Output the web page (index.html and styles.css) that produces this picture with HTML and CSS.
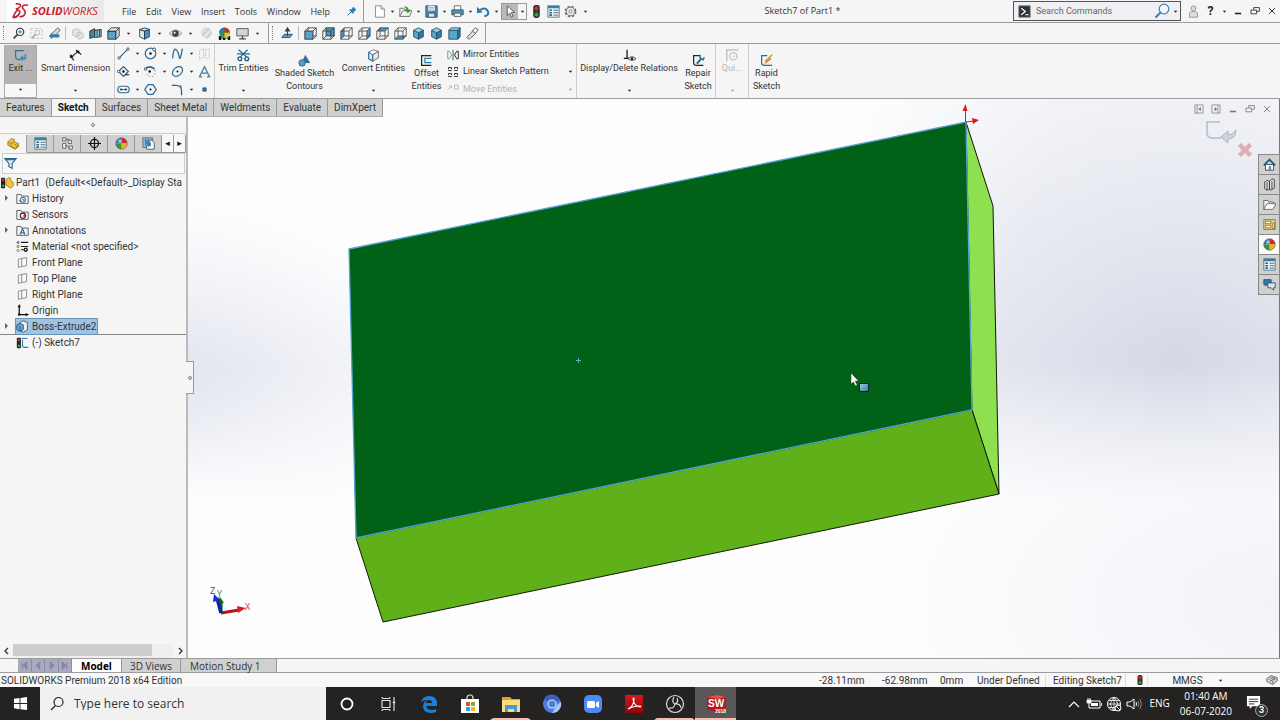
FILE: index.html
```html
<!DOCTYPE html>
<html lang="en">
<head>
<meta charset="utf-8">
<title>Sketch7 of Part1 - SOLIDWORKS</title>
<link rel="stylesheet" href="styles.css">
</head>
<body>
<svg class="sprite" aria-hidden="true">
  <defs>
    <linearGradient id="blueFill" x1="0" y1="0" x2="1" y2="1"><stop offset="0" stop-color="#9fd0e8"/><stop offset="1" stop-color="#2b77a0"/></linearGradient>
    <linearGradient id="redFill" x1="0" y1="0" x2="0" y2="1"><stop offset="0" stop-color="#d8181c"/><stop offset="1" stop-color="#8e0508"/></linearGradient>
  </defs>
  <symbol id="i-down" viewBox="0 0 8 8"><path d="M2 3h4L4 5.500z" fill="#222"/></symbol>
  <symbol id="i-pin" viewBox="0 0 16 16"><path d="M1 15l6-6" stroke="#2a6f98" stroke-width="1.500"/><path d="M3 6l7 7 1-4 4-3-5-5-3 4z" fill="#2f7fae"/></symbol>
  <symbol id="i-new" viewBox="0 0 16 16"><path d="M3 1h7l4 4v10H3z" fill="#fff" stroke="#777"/><path d="M10 1v4h4" fill="#ddd" stroke="#777"/></symbol>
  <symbol id="i-open" viewBox="0 0 16 16"><path d="M1 4h5l1 2h6v8H1z" fill="#eee" stroke="#666"/><path d="M1 14l4-7h11l-3 7z" fill="#f6f6f6" stroke="#666"/><path d="M6 2q5-1 6 4h3l-4 4-4-4h2Q9 3 6 2z" fill="#3c9b35"/></symbol>
  <symbol id="i-save" viewBox="0 0 16 16"><path d="M1 1h14v14H1z" fill="#4d8aab" stroke="#26506a"/><path d="M4 1h8v6H4z" fill="#eef5f8"/><path d="M4 10h8v5H4z" fill="#dfe7ec" stroke="#26506a"/><path d="M5 3h6M5 5h6" stroke="#8aa"/></symbol>
  <symbol id="i-print" viewBox="0 0 16 16"><path d="M4 1h8v6H4z" fill="#fff" stroke="#555"/><path d="M1 6h14v6H1z" fill="#4f94ba" stroke="#2b4c5e"/><path d="M4 10h8v4H4z" fill="#fff" stroke="#444"/></symbol>
  <symbol id="i-undo" viewBox="0 0 16 16"><path d="M4 6q6-4 9 1t-4 7" fill="none" stroke="#2b78a8" stroke-width="2.500"/><path d="M0 2v8l7-1z" fill="#2b78a8"/></symbol>
  <symbol id="i-cursor" viewBox="0 0 16 16"><path d="M4 1v12l3-3 2 5 2-1-2-5h4z" fill="#fff" stroke="#444"/></symbol>
  <symbol id="i-traffic" viewBox="0 0 16 16"><rect x="4" y="0" width="8" height="16" rx="3" fill="#2b2b2b"/><circle cx="8" cy="4" r="2.500" fill="#e02b20"/><circle cx="8" cy="8" r="1.500" fill="#5a4a20"/><circle cx="8" cy="12" r="2.500" fill="#2aa84a"/></symbol>
  <symbol id="i-props" viewBox="0 0 16 16"><path d="M1 1h14v14H1z" fill="#e9f2f7" stroke="#4a6b7c"/><path d="M1 1h14v3H1z" fill="#3a7ea6"/><path d="M3 6.500h3M3 9.500h3M3 12.500h3" stroke="#1f5f88" stroke-width="2"/><path d="M8 6.500h6M8 9.500h6M8 12.500h6" stroke="#456"/></symbol>
  <symbol id="i-gear" viewBox="0 0 16 16"><circle cx="8" cy="8" r="6.300" fill="none" stroke="#666" stroke-width="2" stroke-dasharray="3 2"/><circle cx="8" cy="8" r="5" fill="#f4f4f4" stroke="#666"/><circle cx="8" cy="8" r="2" fill="none" stroke="#666"/></symbol>
  <symbol id="i-prompt" viewBox="0 0 16 16"><path d="M1 1h14v14H1z" fill="#2c3338" stroke="#777"/><path d="M4 4l5 4-5 4M9 12h4" fill="none" stroke="#fff" stroke-width="1.500"/></symbol>
  <symbol id="i-search" viewBox="0 0 16 16"><circle cx="10" cy="6" r="4.800" fill="#f2f8fc" stroke="currentColor" stroke-width="1.200"/><path d="M6.500 9.500L1.500 14.500" stroke="currentColor" stroke-width="2"/></symbol>
  <symbol id="i-user" viewBox="0 0 16 16"><circle cx="8" cy="4" r="3" fill="#ddd" stroke="#888"/><path d="M3 15v-4q0-3 5-3t5 3v4z" fill="#ddd" stroke="#888"/></symbol>
  <symbol id="i-min" viewBox="0 0 16 16"><path d="M3 12h10" stroke="currentColor" stroke-width="2.500"/></symbol>
  <symbol id="i-restore" viewBox="0 0 16 16"><path d="M6 6V2.500h9v6h-4M1.500 6.500h9v6h-9z" fill="none" stroke="currentColor" stroke-width="1.300"/></symbol>
  <symbol id="i-close" viewBox="0 0 16 16"><path d="M3 3l10 10M13 3L3 13" stroke="currentColor" stroke-width="1.400"/></symbol>
  <symbol id="i-zoomfit" viewBox="0 0 16 16"><circle cx="10" cy="6" r="4.500" fill="#e6f0f6" stroke="#333" stroke-width="1.400"/><path d="M7 9l-5 5" stroke="#444" stroke-width="2.200"/><path d="M10 3.500v5M7.500 6h5" stroke="#2f7fae"/></symbol>
  <symbol id="i-zoomarea" viewBox="0 0 16 16"><path d="M1 2h14v12H1z" fill="none" stroke="#bbb" stroke-dasharray="3 2"/><circle cx="9" cy="7" r="3" fill="none" stroke="#aaa"/><path d="M7 9l-5 5" stroke="#aaa" stroke-width="2"/></symbol>
  <symbol id="i-prev" viewBox="0 0 16 16"><path d="M4 9l8-8 3 3-8 8z" fill="#ddd" stroke="#444"/><path d="M1 11l4-4v2h9v4H5v2z" fill="#2f7fae"/></symbol>
  <symbol id="i-sectiong" viewBox="0 0 16 16"><path d="M2 4l5-2 4 2v6l-5 2-4-2zM7 8l4-2 4 2v5l-4 2-4-2z" fill="#e4e4e4" stroke="#bbb"/></symbol>
  <symbol id="i-section" viewBox="0 0 16 16"><path d="M1 5l6-3v10l-6 2z" fill="#3f87ae" stroke="#222"/><path d="M7 4l8-1v9l-8 1z" fill="#88bedb" stroke="#222"/><path d="M10 4v8M13 3v9" stroke="#333"/></symbol>
  <symbol id="i-cube" viewBox="0 0 16 16"><path d="M1 5h10v10H1z" fill="#5aa3c8" stroke="#222"/><path d="M1 5l4-4h10l-4 4z" fill="#e3eef4" stroke="#222"/><path d="M15 1v10l-4 4V5z" fill="#c6dce8" stroke="#222"/></symbol>
  <symbol id="i-cubeshade" viewBox="0 0 16 16"><path d="M2 3l6 2v10l-6-3z" fill="#d5e8f2" stroke="#234"/><path d="M8 5l6-2v9l-6 3z" fill="#4a93ba" stroke="#234"/><path d="M2 3l6-2 6 2-6 2z" fill="#bcdcec" stroke="#234"/></symbol>
  <symbol id="i-eye" viewBox="0 0 16 16"><path d="M0 8q8-9 16 0-8 8-16 0z" fill="#e4e4e4" stroke="#888"/><circle cx="8" cy="8" r="4" fill="#444"/><circle cx="7" cy="7" r="1.200" fill="#fff"/></symbol>
  <symbol id="i-ballgrey" viewBox="0 0 16 16"><circle cx="8" cy="7" r="6" fill="#e2e2e2" stroke="#ccc"/><path d="M3 10l8-8M8 14l6-7" stroke="#ccc" stroke-width="2"/></symbol>
  <symbol id="i-ball" viewBox="0 0 16 16"><circle cx="8" cy="8" r="7" fill="#fff"/><path d="M8 8V1a7 7 0 0 1 7 7z" fill="#d8281e"/><path d="M8 8V1a7 7 0 0 0-7 7z" fill="#2e77bd"/><path d="M8 8h7a7 7 0 0 1-7 7z" fill="#e8b61c"/><path d="M8 8v7a7 7 0 0 1-7-7z" fill="#2c9a3c"/><circle cx="8" cy="8" r="7" fill="none" stroke="#555" stroke-width=".8"/><circle cx="6" cy="5" r="2" fill="#fff" opacity=".6"/></symbol>
  <symbol id="i-scene" viewBox="0 0 16 16"><path d="M1 8h14v8H1z" fill="#fff"/><path d="M1 11h3v2h3v-2h3v2h3v-2h2v5h-3v-2H9v2H6v-2H4v2H1z" fill="#111"/><circle cx="8" cy="7" r="6.500" fill="#2c9a3c"/><path d="M8 7V.5A6.500 6.500 0 0 1 14.500 7z" fill="#d8281e"/><path d="M8 7V.5A6.500 6.500 0 0 0 1.500 7z" fill="#2e77bd"/><path d="M8 7h6.500A6.500 6.500 0 0 1 8 13.500z" fill="#e8c61c"/></symbol>
  <symbol id="i-monitor" viewBox="0 0 16 16"><path d="M1 2h14v9H1z" fill="#d0d5d8" stroke="#444"/><path d="M8 11v3M4 14.500h8" stroke="#444" stroke-width="1.500"/></symbol>
  <symbol id="i-normal" viewBox="0 0 16 16"><path d="M1 13l3-4h10l-3 4z" fill="#5c9dc0" stroke="#246"/><path d="M8 11V3M5.500 5L8 1l2.500 4z" stroke="#246" fill="#246" stroke-width="1.300"/></symbol>
  <symbol id="i-wfront" viewBox="0 0 16 16"><path d="M5 1h10v10H5zM1 5l4-4M11 15l4-4M11 5l4-4M1 15l4-4" fill="none" stroke="#333"/><path d="M1 5h10v10H1z" fill="#5aa3c8" stroke="#222"/></symbol>
  <symbol id="i-wback" viewBox="0 0 16 16"><path d="M5 1h10v10H5z" fill="#4c97bf" stroke="#222"/><path d="M1 5h10v10H1zM1 5l4-4M11 15l4-4M11 5l4-4M1 15l4-4" fill="none" stroke="#333"/></symbol>
  <symbol id="i-wleft" viewBox="0 0 16 16"><path d="M1 5l4-4v10l-4 4z" fill="#4c97bf"/><path d="M5 1h10v10H5zM1 5h10v10H1zM1 5l4-4M11 15l4-4M11 5l4-4M1 15l4-4" fill="none" stroke="#444"/></symbol>
  <symbol id="i-wright" viewBox="0 0 16 16"><path d="M11 5l4-4v10l-4 4z" fill="#4c97bf"/><path d="M5 1h10v10H5zM1 5h10v10H1zM1 5l4-4M11 15l4-4M11 5l4-4M1 15l4-4" fill="none" stroke="#444"/></symbol>
  <symbol id="i-wtop" viewBox="0 0 16 16"><path d="M1 5l4-4h10l-4 4z" fill="#4c97bf"/><path d="M5 1h10v10H5zM1 5h10v10H1zM1 5l4-4M11 15l4-4M11 5l4-4M1 15l4-4" fill="none" stroke="#444"/></symbol>
  <symbol id="i-wbottom" viewBox="0 0 16 16"><path d="M1 15l4-4h10l-4 4z" fill="#4c97bf"/><path d="M5 1h10v10H5zM1 5h10v10H1zM1 5l4-4M11 15l4-4M11 5l4-4M1 15l4-4" fill="none" stroke="#444"/></symbol>
  <symbol id="i-iso" viewBox="0 0 16 16"><path d="M2 4l6 3v8l-6-3z" fill="#5aa6cc" stroke="#1d4a63"/><path d="M14 4L8 7v8l6-3z" fill="#2d7ba5" stroke="#1d4a63"/><path d="M2 4l6-3 6 3-6 3z" fill="#9ed0e8" stroke="#1d4a63"/></symbol>
  <symbol id="i-solid" viewBox="0 0 16 16"><path d="M1 4h11v11H1z" fill="#5aa6cc" stroke="#1d4a63"/><path d="M1 4l3-3h11l-3 3z" fill="#9ed0e8" stroke="#1d4a63"/><path d="M15 1v11l-3 3V4z" fill="#2d7ba5" stroke="#1d4a63"/></symbol>
  <symbol id="i-camera" viewBox="0 0 16 16"><path d="M1 13l7-8 4 3-8 7z" fill="#ddd" stroke="#555"/><path d="M8 5l3-4 4 2-3 5z" fill="#f5f5f5" stroke="#555"/></symbol>
  <symbol id="i-exit" viewBox="0 0 16 16"><path d="M12 2H2v7q0 4 4 4h2" fill="none" stroke="#2a6f98" stroke-width="1.400"/><path d="M7 11.500l4-4V10h2V6h2v7h-4v2.500z" fill="#3f8db8"/></symbol>
  <symbol id="i-dim" viewBox="0 0 16 16"><path d="M3 10L11 3M1 8l5 6M9 1l6 6" stroke="#1b1b1b" stroke-width="1.400"/><path d="M1 11l1-5 4 4zM13 2L8 2l4 4z" fill="#1b1b1b"/></symbol>
  <symbol id="i-line" viewBox="0 0 16 16"><path d="M3 13L13 3" stroke="#2a5f84" stroke-width="1.400"/><circle cx="2.500" cy="13.500" r="1.500" fill="#fff" stroke="#345"/><circle cx="13.500" cy="2.500" r="1.500" fill="#fff" stroke="#345"/></symbol>
  <symbol id="i-circle" viewBox="0 0 16 16"><circle cx="8" cy="8" r="6.500" fill="none" stroke="#2a6f98" stroke-width="1.500"/><circle cx="8" cy="8" r="1.500" fill="#111"/><circle cx="12.500" cy="3" r="1.800" fill="#fff" stroke="#333"/></symbol>
  <symbol id="i-spline" viewBox="0 0 16 16"><path d="M2 14Q3 1 6 3t4 9 4-10" fill="none" stroke="#2a6f98" stroke-width="1.600"/></symbol>
  <symbol id="i-planeg" viewBox="0 0 16 16"><path d="M2 4l5-2v11l-5 2zM9 3l5-1v11l-5 1z" fill="none" stroke="#bbb" stroke-dasharray="2 1"/></symbol>
  <symbol id="i-rect" viewBox="0 0 16 16"><path d="M8 2l6 6-6 6-6-6z" fill="none" stroke="#2a5f84" stroke-width="1.500"/><circle cx="8" cy="8" r="1.500" fill="#111"/><circle cx="2" cy="8" r="1.500" fill="#fff" stroke="#333"/><path d="M10 12h5" stroke="#333" stroke-width="1.500"/></symbol>
  <symbol id="i-arc" viewBox="0 0 16 16"><path d="M2 4q6-4 11 1" fill="none" stroke="#2a5f84" stroke-width="2"/><path d="M13 6q2 4-2 8-4 2-8-3" fill="none" stroke="#777" stroke-dasharray="2 2"/><circle cx="7" cy="8" r="1.500" fill="#111"/><circle cx="2" cy="5" r="1.500" fill="#fff" stroke="#333"/></symbol>
  <symbol id="i-ellipse" viewBox="0 0 16 16"><ellipse cx="8" cy="8" rx="7" ry="5" transform="rotate(-40 8 8)" fill="none" stroke="#2a6f98" stroke-width="1.500"/><circle cx="8" cy="8" r="1.200" fill="#111"/></symbol>
  <symbol id="i-textA" viewBox="0 0 16 16"><path d="M2 14L8 2l6 12M5 10h6M1 14.500h4M11 14.500h4" fill="none" stroke="#4a7d9c" stroke-width="1.500"/></symbol>
  <symbol id="i-slot" viewBox="0 0 16 16"><rect x="1" y="4" width="14" height="8" rx="4" fill="none" stroke="#2a6f98" stroke-width="1.500"/><path d="M4 8h8" stroke="#333"/><circle cx="5" cy="8" r="1.300" fill="#333"/><circle cx="11" cy="8" r="1.300" fill="#333"/></symbol>
  <symbol id="i-hex" viewBox="0 0 16 16"><path d="M5 2h6l4 6-4 6H5L1 8z" fill="none" stroke="#2a6f98" stroke-width="1.600"/><circle cx="8" cy="8" r="1.300" fill="#111"/></symbol>
  <symbol id="i-fillet" viewBox="0 0 16 16"><path d="M1 3h5q7 0 7 7v5" fill="none" stroke="#2a5f84" stroke-width="1.500"/><path d="M8 3h5v5" fill="none" stroke="#888" stroke-dasharray="2 1"/></symbol>
  <symbol id="i-point" viewBox="0 0 16 16"><path d="M6 6h4v4H6z" fill="#2a7db0" stroke="#1d4a63"/></symbol>
  <symbol id="i-trim" viewBox="0 0 16 16"><path d="M2 1l10 9M13 1L4 10M0 6h16" stroke="#2a6f98" stroke-width="1.600"/><circle cx="3.500" cy="12" r="2.300" fill="none" stroke="#1f5f88" stroke-width="1.700"/><circle cx="12" cy="12" r="2.300" fill="none" stroke="#1f5f88" stroke-width="1.700"/></symbol>
  <symbol id="i-shaded" viewBox="0 0 16 16"><path d="M9 1l6 10H4z" fill="#2d7397"/><circle cx="5" cy="11" r="4" fill="#5c9cbf" stroke="#25617f"/></symbol>
  <symbol id="i-convert" viewBox="0 0 16 16"><path d="M2 4l5 3v8l-5-3zM14 3L7 7v8l7-4z" fill="#e2eef4" stroke="#556"/><path d="M2 4l6-3 6 2-7 4z" fill="#fff" stroke="#556"/><path d="M2 4v8l5 3" fill="none" stroke="#2a7db0" stroke-width="1.500"/></symbol>
  <symbol id="i-offset" viewBox="0 0 16 16"><path d="M14 2H2v12h12" fill="none" stroke="#222" stroke-width="1.500"/><path d="M14 5.500H6v5h8" fill="none" stroke="#2a7db0" stroke-width="1.500"/></symbol>
  <symbol id="i-mirror" viewBox="0 0 16 16"><path d="M8 1v14" stroke="#222"/><path d="M1 3h2l3 5-3 5H1z" fill="none" stroke="#4a8a8a"/><path d="M15 3h-2l-3 5 3 5h2z" fill="none" stroke="#222" stroke-width="1.300"/></symbol>
  <symbol id="i-linear" viewBox="0 0 16 16"><path d="M2 2h4v4H2zM10 2h4v4h-4zM2 10h4v4H2zM10 10h4v4h-4z" fill="none" stroke="#333" stroke-width="1.300" stroke-dasharray="6 1"/></symbol>
  <symbol id="i-move" viewBox="0 0 16 16"><path d="M1 9l5-5M3 4h3v3M10 3h5v5h-5z" fill="none" stroke="#bbb" stroke-width="1.300"/></symbol>
  <symbol id="i-relations" viewBox="0 0 16 16"><path d="M5 1v10M1 11.500h8" stroke="#111" stroke-width="1.500"/><path d="M6 12q5-5 10 0-5 4-10 0z" fill="#fff" stroke="#333"/><circle cx="11" cy="12" r="1.700" fill="#222"/></symbol>
  <symbol id="i-repair" viewBox="0 0 16 16"><path d="M10 2H2v8q0 4 4 4h8" fill="none" stroke="#222" stroke-width="1.500"/><path d="M6 12l6-7" stroke="#25709b" stroke-width="2.500"/><path d="M10 1v4l4 2 1-3" fill="none" stroke="#25709b" stroke-width="1.700"/></symbol>
  <symbol id="i-quick" viewBox="0 0 16 16"><path d="M1 15V1h14" fill="none" stroke="#bbb" stroke-width="1.500"/><circle cx="9" cy="9" r="4.500" fill="none" stroke="#bbb" stroke-width="1.300"/><circle cx="9" cy="9" r="1" fill="#bbb"/></symbol>
  <symbol id="i-rapid" viewBox="0 0 16 16"><path d="M9 2H2v9q0 3 4 3h9" fill="none" stroke="#2a6f98" stroke-width="1.500"/><path d="M14 1L6 9l3-1-3 4 8-6-3 .5 4-5.500z" fill="#f0a020" stroke="#c65a10" stroke-width=".6"/></symbol>
  <symbol id="i-part" viewBox="0 0 16 16"><path d="M1 6l4-4 4 1v3l5 2v4l-4 3-9-5z" fill="#f0c53c" stroke="#9a7412"/><path d="M1 6l4 2 4-2M5 8v4l5 2 4-3-5-2" fill="none" stroke="#9a7412"/></symbol>
  <symbol id="i-config" viewBox="0 0 16 16"><path d="M2 1h4v4H2zM2 8h4v6H2zM9 4h4v4H9zM10 11h4v4h-4zM6 3h4v1M6 10l4 3" fill="#eee" stroke="#555"/></symbol>
  <symbol id="i-target" viewBox="0 0 16 16"><circle cx="8" cy="8" r="5" fill="none" stroke="#111" stroke-width="1.600"/><path d="M8 0v16M0 8h16" stroke="#111" stroke-width="1.400"/></symbol>
  <symbol id="i-cam" viewBox="0 0 16 16"><path d="M1 1h12v12H1z" fill="#8abada" stroke="#567"/><path d="M4 4h8l3 3v8H6z" fill="#fff" stroke="#345"/><path d="M4 6l4-2 3 3v4l-4 1z" fill="#3a83ad"/></symbol>
  <symbol id="i-filter" viewBox="0 0 16 16"><path d="M1 2h14l-5 6v6l-4-2V8z" fill="#dcebf3" stroke="#2a5f84" stroke-width="1.300"/><path d="M2 3h12" stroke="#2a6f98" stroke-width="2"/></symbol>
  <symbol id="i-partroot" viewBox="0 0 16 16"><rect x="0" y="2" width="5" height="13" rx="1" fill="#222"/><circle cx="2.500" cy="5" r="1.700" fill="#e02b20"/><circle cx="2.500" cy="12" r="1.500" fill="#2aa84a"/><path d="M6 5l3-3 3 1v3l3 2v4l-3 3-6-4z" fill="#f0c53c" stroke="#9a7412"/></symbol>
  <symbol id="i-folderhist" viewBox="0 0 16 16"><path d="M1 14V3h5l1 2h8v9z" fill="#f4f4f4" stroke="#444"/><circle cx="8.500" cy="9.500" r="3" fill="#fff" stroke="#2a7db0" stroke-width="1.300"/><path d="M8.500 8v2h2M4 10l2 2" fill="none" stroke="#333"/></symbol>
  <symbol id="i-foldersens" viewBox="0 0 16 16"><path d="M1 14V3h5l1 2h8v9z" fill="#f4f4f4" stroke="#444"/><circle cx="8.500" cy="9.500" r="3.200" fill="#fff" stroke="#222" stroke-width="1.300"/><path d="M8 10l3-3v4z" fill="#d8281e"/></symbol>
  <symbol id="i-folderann" viewBox="0 0 16 16"><path d="M1 14V3h5l1 2h8v9z" fill="#f4f4f4" stroke="#444"/><path d="M5 13l3-7 3 7M6 11h4" fill="none" stroke="#2a6fa8" stroke-width="1.500"/></symbol>
  <symbol id="i-material" viewBox="0 0 16 16"><path d="M6 3h9M6 8h9M6 12h5" stroke="#222" stroke-width="1.500"/><circle cx="2.500" cy="3" r="1.500" fill="#6ab0c0" stroke="#555" stroke-width=".6"/><circle cx="2.500" cy="8" r="1.500" fill="#e5c33a" stroke="#555" stroke-width=".6"/><circle cx="2.500" cy="13" r="1.500" fill="#ddd" stroke="#555" stroke-width=".6"/><circle cx="12" cy="12" r="2.700" fill="#222"/><circle cx="12" cy="12" r="1" fill="#fff"/></symbol>
  <symbol id="i-plane" viewBox="0 0 16 16"><path d="M3 4l4-1v10l-4 1zM7 3l6-1v10l-6 1" fill="#fafafa" stroke="#777"/></symbol>
  <symbol id="i-origin" viewBox="0 0 16 16"><path d="M4 3v10h10" fill="none" stroke="#111" stroke-width="1.500"/><path d="M4 0L2 4h4zM16 13l-4-2v4z" fill="#111"/><circle cx="4" cy="13" r="1.600" fill="#111"/></symbol>
  <symbol id="i-boss" viewBox="0 0 16 16"><path d="M5 3l4-2 5 2v9l-5 3-4-2z" fill="#eef4f8" stroke="#444"/><path d="M1 6l4-2 4 2v6l-4 2-4-2z" fill="#5fa6cb" stroke="#1d5577"/><path d="M5 8v6" stroke="#1d5577"/></symbol>
  <symbol id="i-sketch" viewBox="0 0 16 16"><rect x="1" y="2" width="5" height="13" rx="1" fill="#222"/><circle cx="3.500" cy="5" r="1.600" fill="#e02b20"/><circle cx="3.500" cy="12" r="1.600" fill="#2aa84a"/><path d="M7 3h7M8 5v7q0 2 3 2h4" fill="none" stroke="#2a7db0" stroke-width="1.300"/></symbol>
  <symbol id="i-panel-l" viewBox="0 0 16 16"><path d="M1.500 1.500h13v13h-13zM5 2v13" fill="none" stroke="#888" stroke-width="1.300"/><path d="M11 5v6L7 8z" fill="#666"/></symbol>
  <symbol id="i-panel-r" viewBox="0 0 16 16"><path d="M1.500 1.500h13v13h-13zM11 2v13" fill="none" stroke="#888" stroke-width="1.300"/><path d="M6 5v6l4-3z" fill="#666"/></symbol>
  <symbol id="i-home" viewBox="0 0 16 16"><path d="M3 8h10v7H3z" fill="#fff" stroke="#333"/><path d="M1 9l7-7 7 7" fill="none" stroke="#1f5d82" stroke-width="2.200"/><path d="M7 10h3v5H7z" fill="#6a8fa5"/></symbol>
  <symbol id="i-library" viewBox="0 0 16 16"><path d="M2 5l3-2 3 1v10l-3 1-3-2zM8 4l3-3 3 1v10l-4 3-2-1z" fill="#ddd" stroke="#333"/><path d="M5 5v10M11 4v10" stroke="#333"/></symbol>
  <symbol id="i-folder" viewBox="0 0 16 16"><path d="M1 14V3h5l1 2h6v2" fill="#f4f4f4" stroke="#555"/><path d="M1 14l4-7h11l-4 7z" fill="#fff" stroke="#555"/></symbol>
  <symbol id="i-palette" viewBox="0 0 16 16"><path d="M1 2h14v12H1z" fill="#f4dc84" stroke="#666"/><path d="M3 4h7v3H3zM3 9h7v3H3zM12 6h2v7h-2z" fill="#fff" stroke="#8a6510"/></symbol>
  <symbol id="i-chat" viewBox="0 0 16 16"><path d="M1 2h9v6H5l-2 2V8H1z" fill="#2f7ca8" stroke="#1d4a63"/><path d="M6 6h9v6h-2v3l-3-3H6z" fill="#d4e8f2" stroke="#345"/></symbol>
</svg>

<header class="titlebar">
  <div class="brand">
    <svg class="ds" viewBox="0 0 20 18" aria-hidden="true"><path d="M5 1.500Q11 1 10 4 9 6 5 7M2 16Q5 9 7 8q4 1 1 5-2 3-6 3M18 3q-6-1-6 2 0 1 2 3 2 3 0 5-1 2-5 2" fill="none" stroke="#c6202a" stroke-width="1.700"/></svg>
    <span class="wordmark"><b>SOLID</b>WORKS</span>
  </div>
  <nav class="menu">
    <button>File</button><button>Edit</button><button>View</button><button>Insert</button><button>Tools</button><button>Window</button><button>Help</button>
  </nav>
  <button class="pin" aria-label="Pin menu"><svg class="ic s10"><use href="#i-pin"/></svg></button>
  <div class="quick">
    <button aria-label="New"><svg class="ic"><use href="#i-new"/></svg></button><button class="dd" aria-label="New options"><svg><use href="#i-down"/></svg></button>
    <button aria-label="Open"><svg class="ic"><use href="#i-open"/></svg></button><button class="dd" aria-label="Open options"><svg><use href="#i-down"/></svg></button>
    <button aria-label="Save"><svg class="ic"><use href="#i-save"/></svg></button><button class="dd" aria-label="Save options"><svg><use href="#i-down"/></svg></button>
    <button aria-label="Print"><svg class="ic"><use href="#i-print"/></svg></button><button class="dd" aria-label="Print options"><svg><use href="#i-down"/></svg></button>
    <button aria-label="Undo"><svg class="ic"><use href="#i-undo"/></svg></button><button class="dd" aria-label="Undo options"><svg><use href="#i-down"/></svg></button>
    <span class="select-tool"><button class="on" aria-label="Select"><svg class="ic"><use href="#i-cursor"/></svg></button><button class="dd" aria-label="Select options"><svg><use href="#i-down"/></svg></button></span>
    <button class="wide" aria-label="Rebuild"><svg class="ic"><use href="#i-traffic"/></svg></button>
    <button class="wide" aria-label="File properties"><svg class="ic"><use href="#i-props"/></svg></button>
    <button class="wide" aria-label="Options"><svg class="ic"><use href="#i-gear"/></svg></button><button class="dd" aria-label="More options"><svg><use href="#i-down"/></svg></button>
  </div>
  <h1 class="doc-title">Sketch7 of Part1 *</h1>
  <form class="search">
    <svg class="ic"><use href="#i-prompt"/></svg>
    <input type="text" placeholder="Search Commands" aria-label="Search Commands">
    <svg class="ic s16 glass"><use href="#i-search"/></svg>
    <button type="button" class="dd" aria-label="Search options"><svg><use href="#i-down"/></svg></button>
  </form>
  <div class="win">
    <button aria-label="Sign in"><svg class="ic"><use href="#i-user"/></svg></button>
    <button class="help" aria-label="Help">?</button><button class="dd" aria-label="Help options"><svg><use href="#i-down"/></svg></button>
    <button aria-label="Minimize"><svg class="ic s10"><use href="#i-min"/></svg></button>
    <button aria-label="Restore"><svg class="ic s10"><use href="#i-restore"/></svg></button>
    <button aria-label="Close"><svg class="ic s10"><use href="#i-close"/></svg></button>
  </div>
</header>

<div class="viewbar">
  <div class="strip">
    <button aria-label="Zoom to fit"><svg class="ic"><use href="#i-zoomfit"/></svg></button>
    <button aria-label="Zoom to area"><svg class="ic"><use href="#i-zoomarea"/></svg></button>
    <button aria-label="Previous view"><svg class="ic"><use href="#i-prev"/></svg></button>
    <i class="sep"></i>
    <button aria-label="Dynamic annotation"><svg class="ic"><use href="#i-sectiong"/></svg></button>
    <button aria-label="Section view"><svg class="ic"><use href="#i-section"/></svg></button>
    <button aria-label="View orientation"><svg class="ic"><use href="#i-cube"/></svg></button><button class="dd" aria-label="Orientation options"><svg><use href="#i-down"/></svg></button>
    <button aria-label="Display style"><svg class="ic"><use href="#i-cubeshade"/></svg></button><button class="dd" aria-label="Display options"><svg><use href="#i-down"/></svg></button>
    <button aria-label="Hide or show"><svg class="ic"><use href="#i-eye"/></svg></button><button class="dd" aria-label="Visibility options"><svg><use href="#i-down"/></svg></button>
    <button aria-label="Edit appearance"><svg class="ic"><use href="#i-ballgrey"/></svg></button>
    <button aria-label="Apply scene"><svg class="ic"><use href="#i-scene"/></svg></button>
    <button aria-label="View settings"><svg class="ic"><use href="#i-monitor"/></svg></button><button class="dd" aria-label="Settings options"><svg><use href="#i-down"/></svg></button>
  </div>
  <div class="strip">
    <button aria-label="Normal to"><svg class="ic"><use href="#i-normal"/></svg></button>
    <i class="sep"></i>
    <button aria-label="Front"><svg class="ic"><use href="#i-wfront"/></svg></button>
    <button aria-label="Back"><svg class="ic"><use href="#i-wback"/></svg></button>
    <button aria-label="Left"><svg class="ic"><use href="#i-wleft"/></svg></button>
    <button aria-label="Right"><svg class="ic"><use href="#i-wright"/></svg></button>
    <button aria-label="Top"><svg class="ic"><use href="#i-wtop"/></svg></button>
    <button aria-label="Bottom"><svg class="ic"><use href="#i-wbottom"/></svg></button>
    <button aria-label="Isometric"><svg class="ic"><use href="#i-iso"/></svg></button>
    <button aria-label="Trimetric"><svg class="ic"><use href="#i-iso"/></svg></button>
    <button aria-label="Dimetric"><svg class="ic"><use href="#i-solid"/></svg></button>
    <button aria-label="Camera view"><svg class="ic"><use href="#i-camera"/></svg></button>
  </div>
</div>

<div class="ribbon">
  <button class="tool exit"><svg class="ic"><use href="#i-exit"/></svg><span>Exit ...</span><svg class="arrow"><use href="#i-down"/></svg></button>
  <button class="tool smart"><svg class="ic"><use href="#i-dim"/></svg><span>Smart Dimension</span><svg class="arrow"><use href="#i-down"/></svg></button>
  <div class="shapes">
    <button aria-label="Line"><svg class="ic"><use href="#i-line"/></svg></button><button class="dd" aria-label="Line options"><svg><use href="#i-down"/></svg></button>
    <button aria-label="Circle"><svg class="ic"><use href="#i-circle"/></svg></button><button class="dd" aria-label="Circle options"><svg><use href="#i-down"/></svg></button>
    <button aria-label="Spline"><svg class="ic"><use href="#i-spline"/></svg></button><button class="dd" aria-label="Spline options"><svg><use href="#i-down"/></svg></button>
    <button aria-label="Plane" disabled><svg class="ic"><use href="#i-planeg"/></svg></button>
    <button aria-label="Rectangle"><svg class="ic"><use href="#i-rect"/></svg></button><button class="dd" aria-label="Rectangle options"><svg><use href="#i-down"/></svg></button>
    <button aria-label="Arc"><svg class="ic"><use href="#i-arc"/></svg></button><button class="dd" aria-label="Arc options"><svg><use href="#i-down"/></svg></button>
    <button aria-label="Ellipse"><svg class="ic"><use href="#i-ellipse"/></svg></button><button class="dd" aria-label="Ellipse options"><svg><use href="#i-down"/></svg></button>
    <button aria-label="Text"><svg class="ic"><use href="#i-textA"/></svg></button>
    <button aria-label="Slot"><svg class="ic"><use href="#i-slot"/></svg></button><button class="dd" aria-label="Slot options"><svg><use href="#i-down"/></svg></button>
    <button aria-label="Polygon"><svg class="ic"><use href="#i-hex"/></svg></button><i></i>
    <button aria-label="Fillet"><svg class="ic"><use href="#i-fillet"/></svg></button><button class="dd" aria-label="Fillet options"><svg><use href="#i-down"/></svg></button>
    <button aria-label="Point"><svg class="ic"><use href="#i-point"/></svg></button>
  </div>
  <button class="tool trim"><svg class="ic"><use href="#i-trim"/></svg><span>Trim Entities</span><svg class="arrow"><use href="#i-down"/></svg></button>
  <button class="tool two shaded"><svg class="ic"><use href="#i-shaded"/></svg><span>Shaded Sketch<br>Contours</span></button>
  <button class="tool convert"><svg class="ic"><use href="#i-convert"/></svg><span>Convert Entities</span><svg class="arrow"><use href="#i-down"/></svg></button>
  <button class="tool two offset"><svg class="ic"><use href="#i-offset"/></svg><span>Offset<br>Entities</span></button>
  <div class="stack">
    <button><svg class="ic s12"><use href="#i-mirror"/></svg><span>Mirror Entities</span></button>
    <button><svg class="ic s12"><use href="#i-linear"/></svg><span>Linear Sketch Pattern</span><svg class="arrow"><use href="#i-down"/></svg></button>
    <button disabled><svg class="ic s12"><use href="#i-move"/></svg><span>Move Entities</span><svg class="arrow"><use href="#i-down"/></svg></button>
  </div>
  <button class="tool relations"><svg class="ic"><use href="#i-relations"/></svg><span>Display/Delete Relations</span><svg class="arrow"><use href="#i-down"/></svg></button>
  <button class="tool two repair"><svg class="ic"><use href="#i-repair"/></svg><span>Repair<br>Sketch</span></button>
  <button class="tool snaps" disabled><svg class="ic"><use href="#i-quick"/></svg><span>Qui...</span><svg class="arrow"><use href="#i-down"/></svg></button>
  <button class="tool two rapid"><svg class="ic"><use href="#i-rapid"/></svg><span>Rapid<br>Sketch</span></button>
</div>

<main class="workspace">
  <svg class="scene" viewBox="0 99 1280 559" preserveAspectRatio="xMidYMid slice" role="img" aria-label="Extruded block with selected front face">
    <path d="M966 122L993 206 999 494 972 410z" fill="#8ee04f" stroke="#101a08"/>
    <path d="M356 538L972 410 999 494 383 622z" fill="#5fb019" stroke="#101a08"/>
    <path d="M349 249L966 122 972 410 356 538z" fill="#006117" stroke="#57a3d6" stroke-width="1.300"/>
    <path d="M576 360.500h5M578.500 358v5" stroke="#5fb4c8"/>
    <path d="M965.500 122v-14M966 122l8-1" stroke="#e01818"/><path d="M965.500 104l-3 7h5zM979 120l-7-2 1 6z" fill="#e01818"/>
    <path d="M851 373v11l2.500-2 2 4 1.700-1-2-4h3.300z" fill="#fff" stroke="#333" stroke-width=".5"/>
    <path d="M859.500 383.500h9v8h-9z" fill="url(#blueFill)" stroke="#123"/>
    <path d="M221 613l18-3" stroke="#b01818" stroke-width="3"/><path d="M237 606l9 2-8 5z" fill="#e02020"/>
    <path d="M221 613v-12" stroke="#0c5a18" stroke-width="3"/><path d="M217 604l3-7 4 6z" fill="#0c6a18"/>
    <path d="M221 613l-4-15" stroke="#1520a0" stroke-width="3.500"/><path d="M213 602l1-8 6 6z" fill="#1c2cd0"/>
    <text x="210" y="594" class="axis z">Z</text><text x="217" y="597" class="axis y">Y</text><text x="245" y="610" class="axis x">X</text>
    <path d="M1220 122h-13v11q0 5 6 5h8" fill="none" stroke="#b4bcc8" stroke-width="1.500"/>
    <path d="M1221 137l7-6v4q5 0 8-5 0 9-8 9v4z" fill="#ccd6df" stroke="#a8b4c0"/>
    <path d="M1239.500 144.500l11 11M1250.500 144.500l-11 11" stroke="#e0aeb2" stroke-width="4.500"/>
  </svg>
  <nav class="tabs">
    <button>Features</button><button class="active">Sketch</button><button>Surfaces</button><button>Sheet Metal</button><button>Weldments</button><button>Evaluate</button><button>DimXpert</button>
  </nav>
  <div class="mid">
    <aside class="panel">
      <div class="grab"><i class="dot"></i></div>
      <div class="ptabs">
        <button class="active" aria-label="Feature tree"><svg class="ic"><use href="#i-part"/></svg></button>
        <button aria-label="Properties"><svg class="ic"><use href="#i-props"/></svg></button>
        <button aria-label="Configurations"><svg class="ic"><use href="#i-config"/></svg></button>
        <button aria-label="DimXpert"><svg class="ic"><use href="#i-target"/></svg></button>
        <button aria-label="Display"><svg class="ic"><use href="#i-ball"/></svg></button>
        <button aria-label="CAM"><svg class="ic"><use href="#i-cam"/></svg></button>
        <button class="nav" aria-label="Scroll left">◂</button><button class="nav" aria-label="Scroll right">▸</button>
      </div>
      <label class="filter"><svg class="ic"><use href="#i-filter"/></svg><input type="text" aria-label="Filter tree"></label>
      <ul class="tree">
        <li class="root"><svg class="ic"><use href="#i-partroot"/></svg><span>Part1&nbsp; (Default&lt;&lt;Default&gt;_Display Sta</span></li>
        <li class="parent"><svg class="ic"><use href="#i-folderhist"/></svg><span>History</span></li>
        <li><svg class="ic"><use href="#i-foldersens"/></svg><span>Sensors</span></li>
        <li class="parent"><svg class="ic"><use href="#i-folderann"/></svg><span>Annotations</span></li>
        <li><svg class="ic"><use href="#i-material"/></svg><span>Material &lt;not specified&gt;</span></li>
        <li><svg class="ic"><use href="#i-plane"/></svg><span>Front Plane</span></li>
        <li><svg class="ic"><use href="#i-plane"/></svg><span>Top Plane</span></li>
        <li><svg class="ic"><use href="#i-plane"/></svg><span>Right Plane</span></li>
        <li><svg class="ic"><use href="#i-origin"/></svg><span>Origin</span></li>
        <li class="parent"><div class="picked"><svg class="ic"><use href="#i-boss"/></svg><span>Boss-Extrude2</span></div></li>
        <li class="rollback"><svg class="ic"><use href="#i-sketch"/></svg><span>(-) Sketch7</span></li>
      </ul>
      <div class="hscroll"><button aria-label="Scroll left"><svg viewBox="0 0 8 8"><path d="M5 1L2 4l3 3" fill="none" stroke="#333" stroke-width="1.300"/></svg></button><div class="track"><i></i></div><button aria-label="Scroll right"><svg viewBox="0 0 8 8"><path d="M3 1l3 3-3 3" fill="none" stroke="#333" stroke-width="1.300"/></svg></button></div>
      <button class="splitter" aria-label="Collapse panel"><i class="dot"></i></button>
    </aside>
  </div>
  <div class="docwin">
    <button aria-label="Expand left"><svg class="ic s10"><use href="#i-panel-l"/></svg></button><button aria-label="Expand right"><svg class="ic s10"><use href="#i-panel-r"/></svg></button><button aria-label="Minimize document"><svg class="ic s10"><use href="#i-min"/></svg></button><button aria-label="Restore document"><svg class="ic s10"><use href="#i-restore"/></svg></button><button aria-label="Close document"><svg class="ic s10"><use href="#i-close"/></svg></button>
  </div>
  <nav class="taskpane">
    <button aria-label="Resources"><svg class="ic"><use href="#i-home"/></svg></button>
    <button aria-label="Design library"><svg class="ic"><use href="#i-library"/></svg></button>
    <button aria-label="File explorer"><svg class="ic"><use href="#i-folder"/></svg></button>
    <button aria-label="View palette"><svg class="ic"><use href="#i-palette"/></svg></button>
    <button class="active" aria-label="Appearances"><svg class="ic"><use href="#i-ball"/></svg></button>
    <button aria-label="Custom properties"><svg class="ic"><use href="#i-props"/></svg></button>
    <button aria-label="Forum"><svg class="ic"><use href="#i-chat"/></svg></button>
  </nav>
</main>

<nav class="sheets">
  <div class="steps">
    <button aria-label="First"><svg viewBox="0 0 8 8"><path d="M2 1v6M6 1v6L3 4z"/></svg></button><button aria-label="Previous"><svg viewBox="0 0 8 8"><path d="M6 1v6L3 4z"/></svg></button><button aria-label="Next"><svg viewBox="0 0 8 8"><path d="M3 1v6l3-3z"/></svg></button><button aria-label="Last"><svg viewBox="0 0 8 8"><path d="M6 1v6M2 1v6l3-3z"/></svg></button>
  </div>
  <button class="sheet active">Model</button><button class="sheet">3D Views</button><button class="sheet last">Motion Study 1</button>
</nav>

<footer class="status">
  <span class="product">SOLIDWORKS Premium 2018 x64 Edition</span>
  <span class="c-x">-28.11mm</span><span class="c-y">-62.98mm</span><span class="c-z">0mm</span><span class="c-def">Under Defined</span><span class="c-edit">Editing Sketch7</span>
  <span class="c-light"><svg class="ic s10"><use href="#i-traffic"/></svg></span>
  <span class="c-unit">MMGS</span><button class="dd" aria-label="Unit options"><svg><use href="#i-down"/></svg></button>
  <svg class="ic s12 tag" viewBox="0 0 16 16"><path d="M1 6l6-4 8 3v4l-6 5-8-4z" fill="#ddd" stroke="#444"/><path d="M3 7l7 3M5 5l7 3M7 4l7 3M9 13v-4M6 10l6-5" stroke="#666"/></svg>
</footer>

<div class="taskbar">
  <button class="start" aria-label="Start"><svg viewBox="0 0 16 16"><path d="M1 3l6-1v5.500H1zM8 2l7-1v6.500H8zM1 8.500h6V14l-6-1zM8 8.500h7V15l-7-1z" fill="#fff"/></svg></button>
  <label class="wsearch"><svg class="ic s16" viewBox="0 0 16 16"><circle cx="9.500" cy="6" r="4.500" fill="none" stroke="#222" stroke-width="1.200"/><path d="M6.500 9.500L2 14" stroke="#222" stroke-width="1.300"/></svg><input type="text" placeholder="Type here to search" aria-label="Type here to search"></label>
  <div class="apps">
    <button aria-label="Cortana"><svg viewBox="0 0 20 20"><circle cx="10" cy="10" r="5.500" fill="none" stroke="#fff" stroke-width="1.800"/></svg></button>
    <button aria-label="Task view"><svg viewBox="0 0 20 20"><path d="M4 6.500h8v7H4zM4 4V3M4 17v-1M12 4V3M12 17v-1M4 4.500h8M4 15.500h8M16 3v4M16 10v7" fill="none" stroke="#ddd" stroke-width="1.200"/><circle cx="16" cy="8.500" r="1.300" fill="#eee"/></svg></button>
    <button aria-label="Edge"><svg viewBox="0 0 20 20"><path d="M2 9Q3 2 10.500 2 18 2 18 10v2H7q1 4 6 4 2 0 4-1v3q-2 1-5 1-7 0-8-6 0-5 4-7-5 0-6 3zM7 9h6q0-3-3-3T7 9z" fill="#1a7fd6"/></svg></button>
    <button aria-label="Store"><svg viewBox="0 0 20 20"><path d="M7 6V4q0-3 3-3t3 3v2" fill="none" stroke="#ddd" stroke-width="1.200"/><path d="M1 5h18v14H1z" fill="#fff"/><path d="M6 8h4v4H6z" fill="#e8502a"/><path d="M11 8h4v4h-4z" fill="#7ab52a"/><path d="M6 13h4v4H6z" fill="#2a9fe0"/><path d="M11 13h4v4h-4z" fill="#f0b820"/></svg></button>
    <button class="open" aria-label="File Explorer"><svg viewBox="0 0 20 20"><path d="M1 3h8l2 2h8v12H1z" fill="#e0a030"/><path d="M1 6h18v12H1z" fill="#fbdc7c"/><path d="M4 18v-7h12v7h-3v-3H7v3z" fill="#4a9cd0"/></svg></button>
    <button aria-label="Chromium"><svg viewBox="0 0 20 20"><circle cx="10" cy="10" r="9" fill="#4a80dc"/><path d="M10 10L2 5a9 9 0 0 1 16 1z" fill="#3a62b4"/><path d="M10 19l5-8 4-3a9 9 0 0 1-9 11z" fill="#a9c6f8"/><circle cx="10" cy="10" r="4.500" fill="#e8f0fd"/><circle cx="10" cy="10" r="3.500" fill="#4a80dc"/></svg></button>
    <button aria-label="Zoom"><svg viewBox="0 0 20 20"><rect x="1" y="1" width="18" height="18" rx="5" fill="#4a8cf0"/><rect x="4" y="7" width="8" height="7" rx="1.500" fill="#fff"/><path d="M13 9l3-2v7l-3-2z" fill="#fff"/></svg></button>
    <button aria-label="Acrobat"><svg viewBox="0 0 20 20"><path d="M1 1h18v18H1z" fill="url(#redFill)"/><path d="M4 15q6-3 6-10 0-2-1 0 1 7 7 8 2-1-1-1-6 0-11 3z" fill="none" stroke="#fff" stroke-width="1.100"/></svg></button>
    <button class="open" aria-label="OBS"><svg viewBox="0 0 20 20"><circle cx="10" cy="10" r="8.500" fill="#222" stroke="#ddd" stroke-width="1.200"/><path d="M9 3q-3 5 1 7 5-1 6 4M10 10q-1 5-6 4M10 10q4-2 2-6" fill="none" stroke="#ddd" stroke-width="1.200"/></svg></button>
    <button class="open current" aria-label="SOLIDWORKS 2018"><svg viewBox="0 0 20 20"><path d="M1 3l10-2 9 2v12l-8 4-11-4z" fill="#b8151c"/><path d="M1 3l10-2 9 2-8 2z" fill="#e05055"/><text x="2" y="13" class="sw">SW</text><text x="9" y="19" class="yr">2018</text></svg></button>
  </div>
  <div class="tray">
    <svg class="t16" viewBox="0 0 16 16"><path d="M3 11l5-5 5 5" fill="none" stroke="#fff" stroke-width="1.200"/></svg>
    <svg class="t16" viewBox="0 0 16 16"><path d="M3 5h11v7H3z" fill="none" stroke="#fff"/><path d="M5 7h7v3H5z" fill="#fff"/><path d="M2 2v2M4 2v2M1 4h4v3H1zM15.500 7v3" fill="#fff" stroke="#fff" stroke-width=".8"/></svg>
    <svg class="t16" viewBox="0 0 16 16"><path d="M8 1.500v13M1.500 8h13M3 4.500h10M3 11.500h10M8 1.500q-7 6.500 0 13M8 1.500q7 6.500 0 13" fill="none" stroke="#fff" stroke-width=".8"/><circle cx="8" cy="8" r="6.500" fill="none" stroke="#fff"/><circle cx="12" cy="12" r="3" fill="#222" stroke="#fff"/><path d="M10 10l4 4" stroke="#fff"/></svg>
    <svg class="t16" viewBox="0 0 16 16"><path d="M1 6h3l4-3v10L4 10H1z" fill="none" stroke="#fff"/><path d="M10 6q1 2 0 4" fill="none" stroke="#fff"/><path d="M12 5q2 3 0 6M14 3q3 5 0 10" fill="none" stroke="#888"/></svg>
    <span class="lang">ENG</span>
    <span class="clock"><time>01:40 AM</time><time>06-07-2020</time></span>
    <span class="notify"><svg viewBox="0 0 16 16"><path d="M1 1h14v11H7l-3 3v-3H1z" fill="#fff"/><path d="M3 4.500h10M3 7h10M3 9.500h6" stroke="#333"/></svg><b>3</b></span>
  </div>
</div>
</body>
</html>
```
FILE: styles.css
```css
:root {
  --ui: Roboto, "Open Sans", sans-serif;
  --wide: "Open Sans", "Noto Sans", sans-serif;
  --bar: #f5f5f5;
  --line: #9c9c9c;
  --tab: #d0d0d0;
  --ink: #333;
}

* { box-sizing: border-box; }

body {
  margin: 0;
  height: 100vh;
  display: flex;
  flex-direction: column;
  overflow: hidden;
  background: var(--bar);
  color: var(--ink);
  font: 9px/13px var(--ui);
}

button, input {
  margin: 0;
  padding: 0;
  border: 0;
  background: none;
  color: inherit;
  font: inherit;
}

button {
  display: flex;
  align-items: center;
  justify-content: center;
  white-space: nowrap;
}

button:disabled { color: #b4b4b4; }
input { min-width: 0; outline: 0; }
.sprite { position: absolute; width: 0; height: 0; }
.ic { width: 13px; height: 13px; flex: none; }
.s10 { width: 10px; height: 10px; }
.s12 { width: 12px; height: 12px; }
.s16 { width: 16px; height: 16px; }
.dd { width: 13px; }
.dd svg, .arrow { width: 7px; height: 7px; flex: none; }
button:disabled .arrow { opacity: .4; }

/* Title bar */
.titlebar {
  height: 23px;
  flex: none;
  display: flex;
  align-items: stretch;
  border-bottom: 1px solid var(--line);
}
.brand {
  width: 97px;
  margin-left: 7px;
  padding-left: 4px;
  display: flex;
  align-items: center;
  gap: 2px;
  background: linear-gradient(90deg, #fff, #e9e9e9);
  color: #c6202a;
}
.ds { width: 19px; height: 18px; }
.wordmark { font: italic 11px/22px "Open Sans", sans-serif; }
.menu { display: flex; justify-content: space-between; width: 208px; margin-left: 18px; font-family: var(--wide); }
.pin { width: 34px; border-right: 1px solid var(--line); padding-left: 11px; }
.quick { display: flex; margin-left: 9px; }
.quick button:not(.dd) { width: 13px; }
.quick .wide:not(.dd) { width: 17px; }
.select-tool { display: flex; margin: 3px 1px 2px -2px; border: 1px solid #999; }
.quick .select-tool .on { width: 16px; background: #b9b9b9; }
.select-tool .dd { width: 8px; }
.doc-title { flex: 1; margin: 0; font: 9px/22px var(--wide); text-align: center; }
.search {
  width: 168px;
  height: 20px;
  margin: 1px 4px 0 0;
  padding: 0 0 0 4px;
  display: flex;
  align-items: center;
  gap: 5px;
  border: 1px solid #555;
  background: #eef0f4;
}
.search input { flex: 1; }
.search input::placeholder { color: #666; opacity: 1; }
.search .dd { width: 10px; margin-left: -5px; }
.glass { color: #3c7fae; }
.win { display: flex; color: #222; }
.win button:not(.dd) { width: 17px; }
.win .dd { width: 10px; }
.win .help { font-size: 12px; font-weight: 700; }

/* Heads-up view toolbar */
.viewbar { height: 21px; flex: none; display: flex; border-bottom: 1px solid var(--line); }
.strip { display: flex; align-items: stretch; padding: 0 4px; border-right: 1px solid var(--line); }
.strip::before { content: ""; width: 1px; margin: 3px 4px 3px -1px; border-left: 1px dotted #888; }
.strip button:not(.dd) { width: 18px; }
.sep { width: 1px; margin: 3px 2px; background: #bbb; }

/* Ribbon */
.ribbon { height: 55px; flex: none; display: flex; padding-left: 4px; border-bottom: 1px solid var(--line); }
.tool {
  flex: none;
  flex-direction: column;
  justify-content: flex-start;
  padding: 5px 0 4px;
}
.tool .arrow { margin-top: auto; }
.tool span { text-align: center; }
.tool.two { padding-top: 10px; }
.tool.exit { width: 33px; margin-top: 1px; padding-top: 4px; border: solid #aaa; border-width: 0 1px 1px; background: linear-gradient(#b4b4b4 39px, #f8f8f8 39px); }
.smart { width: 77px; }
.shapes {
  width: 101px;
  display: grid;
  grid-template-columns: repeat(3, 17px 10px) 17px;
  align-items: center;
  border: solid #ccc;
  border-width: 0 1px;
}
.shapes button { width: auto; }
.trim { width: 57px; }
.shaded { width: 65px; }
.convert { width: 73px; }
.offset { width: 33px; }
.stack { width: 134px; padding: 2px 2px 0 4px; display: flex; flex-direction: column; border-right: 1px solid #ccc; }
.stack button { flex: 1; justify-content: flex-start; gap: 4px; }
.stack .arrow { margin-left: auto; }
.relations { width: 104px; }
.repair { width: 35px; border-right: 1px solid #ccc; }
.snaps { width: 33px; border-right: 1px solid #ccc; }
.rapid { width: 35px; }

/* Graphics area */
.workspace {
  flex: 1;
  min-height: 0;
  position: relative;
  display: flex;
  flex-direction: column;
  box-shadow: inset -1px 0 #777;
  background:
    radial-gradient(ellipse 30% 40% at 100% 90%, rgba(226, 229, 240, .4), transparent),
    linear-gradient(180deg, transparent 48%, #fdfdfe 72%),
    linear-gradient(180deg, rgba(253, 253, 254, .5), transparent 45%),
    radial-gradient(ellipse 28% 95% at 92% 48%, #d5d9e6, rgba(213, 217, 230, .65) 50%, transparent),
    radial-gradient(ellipse 26% 40% at 10% 58%, #d8dce9, transparent),
    #fdfdfe;
}
.scene { position: absolute; inset: 0; width: 100%; height: 100%; }
.axis { font: 9px "Open Sans", sans-serif; }
.axis.x { fill: #c84040; }
.axis.y { fill: #3c8a48; }
.axis.z { fill: #3040a0; }

.tabs { position: relative; display: flex; height: 18px; flex: none; align-self: flex-start; border-bottom: 1px solid #aaa; }
.tabs button { padding: 0 6px; background: var(--tab); border-right: 1px solid #999; font-size: 10px; }
.tabs .active { background: var(--bar); font-weight: 700; color: #111; }

.mid { flex: 1; min-height: 0; display: flex; }
.panel {
  position: relative;
  width: 188px;
  display: flex;
  flex-direction: column;
  background: var(--bar);
  border-right: 2px solid #bbb;
}
.grab { height: 17px; flex: none; display: flex; align-items: center; justify-content: center; border-bottom: 1px solid #ccc; }
.dot { width: 4px; height: 4px; border: 1px solid #888; border-radius: 50%; background: #ddd; }
.ptabs { display: flex; height: 18px; flex: none; margin-top: 1px; }
.ptabs button { width: 27px; background: var(--tab); border: solid #999; border-width: 0 1px 1px 0; }
.ptabs .active { background: var(--bar); border-bottom-color: transparent; }
.ptabs .nav { flex: 1; width: auto; background: #f8f8f8; color: #111; font-family: "DejaVu Sans", sans-serif; }
.filter { height: 21px; flex: none; margin: 0 1px 0 2px; padding-left: 1px; display: flex; align-items: center; border: 1px solid #ccc; background: #f8f8f8; }
.filter input { flex: 1; }
.tree { list-style: none; margin: 0; padding: 0; flex: 1; min-height: 0; overflow: hidden; }
.tree li { height: 16px; display: flex; align-items: center; gap: 3px; padding-left: 16px; font-size: 10px; white-space: nowrap; }
.tree .root { padding-left: 1px; gap: 2px; }
.tree .parent { padding-left: 5px; }
.tree .parent::before { content: ""; margin-right: 5px; border: 3px solid transparent; border-left-color: #666; border-right: 0; }
.picked { display: flex; align-items: center; gap: 3px; height: 15px; padding-right: 1px; outline: 1px solid #6a93b8; background: #9fc3e2; }
.tree .rollback { border-top: 1px solid #888; }
.hscroll { display: flex; height: 14px; flex: none; }
.hscroll button { width: 13px; }
.hscroll svg { width: 8px; height: 8px; }
.track { flex: 1; padding-right: 21px; background: #efefef; }
.track i { display: block; height: 12px; background: #cdcdcd; }
.splitter { position: absolute; left: 186px; top: 244px; width: 8px; height: 33px; background: var(--bar); border: 1px solid #999; border-left: 0; }

.docwin { position: absolute; right: 5px; top: 4px; display: flex; color: #777; }
.docwin button { width: 17px; height: 12px; }
.taskpane { position: absolute; right: 0; top: 55px; width: 22px; border: 1px solid #888; border-bottom: 0; }
.taskpane button { width: 100%; height: 20px; background: var(--tab); border-bottom: 1px solid #888; }
.taskpane .active { background: #fafafa; }

/* Model and motion tabs */
.sheets { height: 15px; flex: none; display: flex; padding-left: 18px; border: solid var(--line); border-width: 1px 0; }
.steps { display: flex; width: 54px; }
.steps button { flex: 1; background: #a9a9c0; border-right: 1px solid #8c8ca4; }
.steps svg { width: 9px; height: 9px; fill: #8686a0; stroke: #8686a0; }
.sheet { padding: 0 8px; background: var(--tab); border-right: 1px solid #999; font: 10px var(--wide); }
.sheet.active { padding: 0 9px; background: #fdfdfd; font-weight: 700; color: #000; }
.sheet.last { padding: 0 15px 0 9px; }

/* Status bar */
.status { height: 14px; flex: none; display: flex; align-items: center; background: #f8f8f8; font-size: 10px; white-space: nowrap; }
.product { flex: 1; padding-left: 1px; }
.c-x { width: 63px; }
.c-y { width: 58px; }
.c-z { width: 37px; }
.c-def { width: 69px; border-right: 1px solid #ddd; }
.c-edit { width: 80px; padding-left: 7px; border-right: 1px solid #ddd; }
.c-light { width: 22px; display: flex; justify-content: center; border-right: 1px solid #ddd; padding-left: 6px; }
.c-unit { width: 66px; text-align: center; padding-left: 13px; }
.tag { margin: 0 2px 0 39px; }

/* Windows taskbar */
.taskbar { height: 33px; flex: none; display: flex; background: #252222; color: #fff; font-family: var(--wide); }
.start { width: 40px; }
.start svg { width: 15px; height: 15px; }
.wsearch { width: 286px; display: flex; align-items: center; gap: 9px; padding-left: 9px; background: #f1f1f1; }
.wsearch input { flex: 1; font-size: 12px; }
.wsearch input::placeholder { color: #333; opacity: 1; }
.apps { display: flex; flex: 1; }
.apps button { width: 41px; border: solid transparent; border-width: 2px 3px; }
.apps svg { width: 20px; height: 20px; }
.apps .open { border-bottom-color: #f3bcae; }
.apps .current { background: #5a5758; border-left-width: 0; border-right-width: 0; }
.sw { font: 700 10px "Liberation Sans", sans-serif; fill: #fff; }
.yr { font: 700 5px "Liberation Sans", sans-serif; fill: #fff; }
.tray { display: flex; align-items: center; gap: 4px; padding-right: 16px; font-size: 10px; }
.t16 { width: 16px; height: 16px; }
.lang { margin-left: 3px; }
.clock { display: flex; flex-direction: column; text-align: center; line-height: 15px; margin: 0 10px 0 6px; }
.notify { position: relative; width: 18px; height: 18px; }
.notify svg { width: 15px; height: 15px; }
.notify b { position: absolute; right: -4px; bottom: -4px; width: 13px; height: 13px; border: 1px solid #aaa; border-radius: 50%; background: #333; font: 700 9px/11px var(--ui); text-align: center; }
```
